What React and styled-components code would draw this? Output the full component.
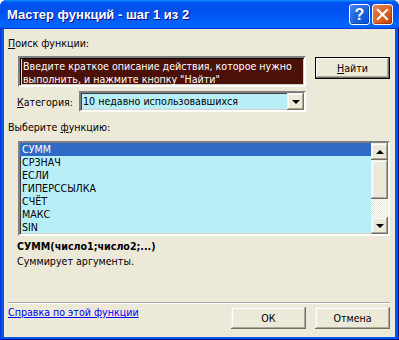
import React from 'react';
import styled, { createGlobalStyle } from 'styled-components';

const Global = createGlobalStyle`
  html, body { margin: 0; padding: 0; background: #ffffff; }
  body { width: 399px; height: 340px; overflow: hidden; }
`;

const font = `"DejaVu Sans Condensed", "Liberation Sans", Arial, sans-serif`;
const CYAN = '#B8EEF8';

const Window = styled.div`
  width: 399px;
  height: 340px;
  box-sizing: border-box;
  display: flex;
  flex-direction: column;
  background: #0055E5;
  border-radius: 7px 7px 0 0;
  overflow: hidden;
  box-shadow: inset 1px 0 #0831D9, inset -1px 0 #00138C, inset 0 -1px #00138C;
  font-family: ${font};
  font-size: 10.6px;
  color: #000;
`;

const TitleBar = styled.div`
  height: 29px;
  flex: none;
  display: flex;
  align-items: center;
  padding: 0 6px 0 7px;
  background: linear-gradient(180deg, #0997ff, #0053ee 8%, #0050ee 40%, #0066ff 88%, #0066ff 93%, #005bff 95%, #003dd7 96%, #003dd7);
`;

const Title = styled.div`
  flex: 1;
  color: #fff;
  font-family: "Liberation Sans", Arial, sans-serif;
  font-weight: bold;
  font-size: 13px;
  text-shadow: 1px 1px #0f1089;
  white-space: nowrap;
`;

const CaptionButton = styled.div`
  width: 21px;
  height: 21px;
  box-sizing: border-box;
  border: 1px solid #fff;
  border-radius: 3px;
  display: flex;
  align-items: center;
  justify-content: center;
  margin-left: ${p => (p.$gap ? '2px' : '0')};
  color: #fff;
  font-family: "Liberation Sans", Arial, sans-serif;
  font-weight: bold;
  font-size: 16px;
  background: ${p =>
    p.$close
      ? 'radial-gradient(circle at 90% 90%, #cc4600 0%, #dc6527 55%, #e5885f 100%)'
      : 'radial-gradient(circle at 90% 90%, #0054e9 0%, #2263d5 55%, #4d89ef 100%)'};
  box-shadow: inset -1px -1px rgba(0, 0, 0, 0.25);
`;

const Client = styled.div`
  flex: 1;
  margin: 0 4px 3px 4px;
  background: #ECE9D8;
  display: flex;
  flex-direction: column;
  padding: 8px 5px 0 4px;
`;

const Text = styled.div`
  line-height: 13px;
  height: 13px;
  white-space: nowrap;
  margin-top: ${p => p.$mt || 0}px;
  padding-left: ${p => p.$pl || 0}px;
  font-weight: ${p => (p.$bold ? 'bold' : 'normal')};
`;

const U = styled.span`
  text-decoration: underline;
`;

const SearchRow = styled.div`
  display: flex;
  align-items: flex-start;
  gap: 9px;
  margin-top: 6px;
  padding-left: 10px;
`;

const Sunken = styled.div`
  box-sizing: border-box;
  border-style: solid;
  border-width: 2px;
  border-color: #808080 #ffffff #ffffff #808080;
  box-shadow: inset 1px 1px #404040, inset -1px -1px #D4D0C8;
  background: ${CYAN};
`;

const SearchBox = styled(Sunken)`
  width: 288px;
  height: 31px;
  padding: 1px;
  box-shadow: inset 1px 1px #000, inset -1px -1px #D4D0C8;
`;

const Selection = styled.div`
  height: 100%;
  background: #4B1109;
  color: #fff;
  line-height: 13px;
  padding: 1px 0 0 1px;
  box-sizing: border-box;
  margin: 0 0 0 1px;
  white-space: nowrap;
`;

const Button = styled.div`
  width: 75px;
  height: 22px;
  box-sizing: border-box;
  display: flex;
  align-items: center;
  justify-content: center;
  background: #ECE9D8;
  margin-top: ${p => p.$mt || 0}px;
  border: ${p => (p.$default ? '1px solid #000' : 'none')};
  box-shadow: ${p =>
    p.$default
      ? 'inset -1px -1px #716F64, inset 1px 1px #fff, inset -2px -2px #ACA899'
      : 'inset -1px -1px #716F64, inset 1px 1px #F1EFE2, inset -2px -2px #ACA899, inset 2px 2px #fff'};
`;

const CategoryRow = styled.div`
  display: flex;
  align-items: center;
  margin-top: 4px;
  padding-left: 9px;
`;

const CatLabel = styled.div`
  width: 62px;
  line-height: 13px;
  margin-top: 1px;
`;

const Select = styled(Sunken)`
  width: 227px;
  height: 21px;
  display: flex;
  align-items: center;
  padding-left: 2px;
`;

const SelectText = styled.div`
  flex: 1;
  line-height: 13px;
`;

const ArrowBtn = styled.div`
  width: 17px;
  height: 17px;
  flex: none;
  box-sizing: border-box;
  display: flex;
  align-items: center;
  justify-content: center;
  background: #ECE9D8;
  box-shadow: inset -1px -1px #716F64, inset 1px 1px #F1EFE2, inset -2px -2px #ACA899, inset 2px 2px #fff;
`;

const Tri = styled.div`
  width: 0;
  height: 0;
  border-left: 4px solid transparent;
  border-right: 4px solid transparent;
  ${p => (p.$up ? 'border-bottom: 4px solid #000;' : 'border-top: 4px solid #000;')}
`;

const ListBox = styled(Sunken)`
  margin-top: 7px;
  margin-left: 10px;
  width: 372px;
  height: 95px;
  display: flex;
`;

const Rows = styled.div`
  flex: 1;
  display: flex;
  flex-direction: column;
`;

const Row = styled.div`
  height: 13px;
  line-height: 13px;
  padding-left: 2px;
  background: ${p => (p.$sel ? '#316AC5' : 'transparent')};
  color: ${p => (p.$sel ? '#fff' : '#000')};
`;

const ScrollBar = styled.div`
  width: 17px;
  display: flex;
  flex-direction: column;
`;

const Thumb = styled(ArrowBtn)`
  height: 39px;
`;

const Track = styled.div`
  flex: 1;
  background-color: #ECE9D8;
  background-image: repeating-conic-gradient(#ffffff 0% 25%, #ECE9D8 0% 50%);
  background-size: 2px 2px;
`;

const Separator = styled.div`
  margin-top: 34px;
  height: 1px;
  background: #ACA899;
  border-bottom: 1px solid #fff;
`;

const Footer = styled.div`
  display: flex;
  align-items: flex-start;
  margin-top: 3px;
`;

const Link = styled.div`
  flex: 1;
  color: #0000ff;
  text-decoration: underline;
  line-height: 13px;
  margin-top: -1px;
`;

const ButtonGroup = styled.div`
  display: flex;
  gap: 9px;
`;

const functions = ['СУММ', 'СРЗНАЧ', 'ЕСЛИ', 'ГИПЕРССЫЛКА', 'СЧЁТ', 'МАКС', 'SIN'];

export default function App() {
  return (
    <>
      <Global />
      <Window>
        <TitleBar>
          <Title>Мастер функций - шаг 1 из 2</Title>
          <CaptionButton>?</CaptionButton>
          <CaptionButton $close $gap>
            <svg width="13" height="13" viewBox="0 0 13 13">
              <path d="M2 2 L11 11 M11 2 L2 11" stroke="#fff" strokeWidth="2.2" strokeLinecap="square" />
            </svg>
          </CaptionButton>
        </TitleBar>
        <Client>
          <Text>
            <U>П</U>оиск функции:
          </Text>
          <SearchRow>
            <SearchBox>
              <Selection>
                Введите краткое описание действия, которое нужно
                <br />
                выполнить, и нажмите кнопку "Найти"
              </Selection>
            </SearchBox>
            <Button $default $mt={1}>
              <span>
                <U>Н</U>айти
              </span>
            </Button>
          </SearchRow>
          <CategoryRow>
            <CatLabel>
              <U>К</U>атегория:
            </CatLabel>
            <Select>
              <SelectText>10 недавно использовавшихся</SelectText>
              <ArrowBtn>
                <Tri />
              </ArrowBtn>
            </Select>
          </CategoryRow>
          <Text $mt={9}>
            Выберите <U>ф</U>ункцию:
          </Text>
          <ListBox>
            <Rows>
              {functions.map((f, i) => (
                <Row key={f} $sel={i === 0}>
                  {f}
                </Row>
              ))}
            </Rows>
            <ScrollBar>
              <ArrowBtn>
                <Tri $up />
              </ArrowBtn>
              <Thumb />
              <Track />
              <ArrowBtn>
                <Tri />
              </ArrowBtn>
            </ScrollBar>
          </ListBox>
          <Text $mt={4} $pl={9} $bold>
            СУММ(число1;число2;...)
          </Text>
          <Text $mt={2} $pl={9}>
            Суммирует аргументы.
          </Text>
          <Separator />
          <Footer>
            <Link>Справка по этой функции</Link>
            <ButtonGroup>
              <Button>ОК</Button>
              <Button>Отмена</Button>
            </ButtonGroup>
          </Footer>
        </Client>
      </Window>
    </>
  );
}
